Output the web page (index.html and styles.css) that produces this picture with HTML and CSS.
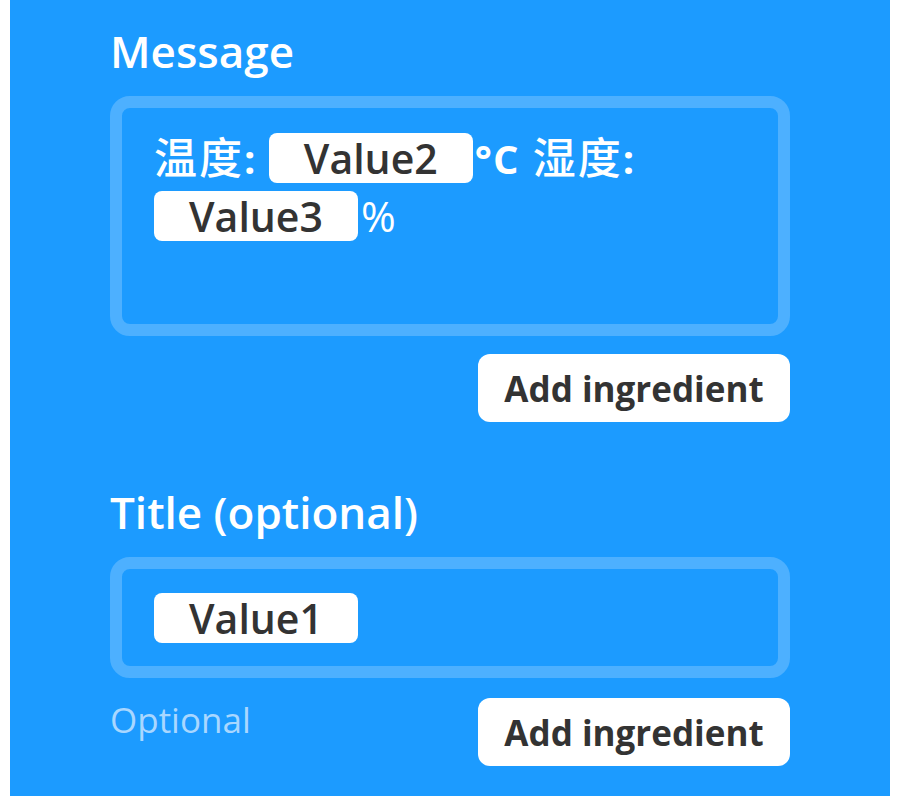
FILE: index.html
```html
<!DOCTYPE html>
<html>
<head>
<meta charset="utf-8">
<link rel="stylesheet" href="styles.css">
</head>
<body>
<div class="panel">
  <div class="label">Message</div>
  <div class="field field-message">
    <span class="cjk">温度</span>: <span class="pill">Value2</span><span class="deg">°C</span> <span class="cjk">湿度</span>: <span class="pill">Value3</span><span class="pct">%</span>
  </div>
  <div class="actions">
    <button class="btn">Add ingredient</button>
  </div>
  <div class="label label-title">Title (optional)</div>
  <div class="field field-title">
    <span class="pill">Value1</span>
  </div>
  <div class="actions actions-between">
    <span class="hint">Optional</span>
    <button class="btn">Add ingredient</button>
  </div>
</div>
</body>
</html>
```
FILE: styles.css
```css
html, body {
  margin: 0;
  padding: 0;
  background: #ffffff;
}
body {
  font-family: "Open Sans", "Noto Sans CJK SC", sans-serif;
}
.panel {
  margin: 0 14px 0 10px;
  height: 796px;
  box-sizing: border-box;
  background: #1c9bff;
  padding: 25px 100px 0 100px;
}
.label {
  color: #ffffff;
  font-size: 44px;
  font-weight: 600;
  line-height: 52px;
  margin-bottom: 19px;
}
.label-title {
  margin-top: 64px;
}
.field {
  border: 12px solid #4db0ff;
  border-radius: 20px;
  box-sizing: border-box;
  padding: 22px 32px 0 32px;
  color: #ffffff;
  font-size: 40px;
  font-weight: 700;
  line-height: 57px;
  word-spacing: 3px;
}
.field-message {
  height: 240px;
}
.field-title {
  height: 121px;
  padding-top: 21px;
}
.cjk {
  font-family: "Noto Sans CJK SC", sans-serif;
  font-size: 43px;
  font-weight: 500;
  line-height: 48px;
  letter-spacing: 2px;
}
.deg {
  margin-left: 2px;
  letter-spacing: 1px;
}
.pct {
  font-weight: 400;
  font-size: 42px;
  margin-left: 3px;
}
.pill {
  display: inline-block;
  background: #ffffff;
  color: #333333;
  border-radius: 8px;
  width: 204px;
  height: 50px;
  line-height: 50px;
  box-sizing: border-box;
  text-align: center;
  font-weight: 600;
  font-size: 41px;
  word-spacing: 0;
}
.actions {
  display: flex;
  justify-content: flex-end;
  align-items: center;
  margin-top: 18px;
}
.actions-between {
  justify-content: space-between;
  margin-top: 20px;
}
.btn {
  border: none;
  background: #ffffff;
  color: #333333;
  border-radius: 12px;
  width: 312px;
  height: 68px;
  font-family: "Open Sans", sans-serif;
  font-size: 35px;
  font-weight: 700;
  padding: 0;
}
.hint {
  color: #a9d7ff;
  font-size: 35px;
  font-weight: 400;
  align-self: flex-start;
  line-height: 44px;
}
```
